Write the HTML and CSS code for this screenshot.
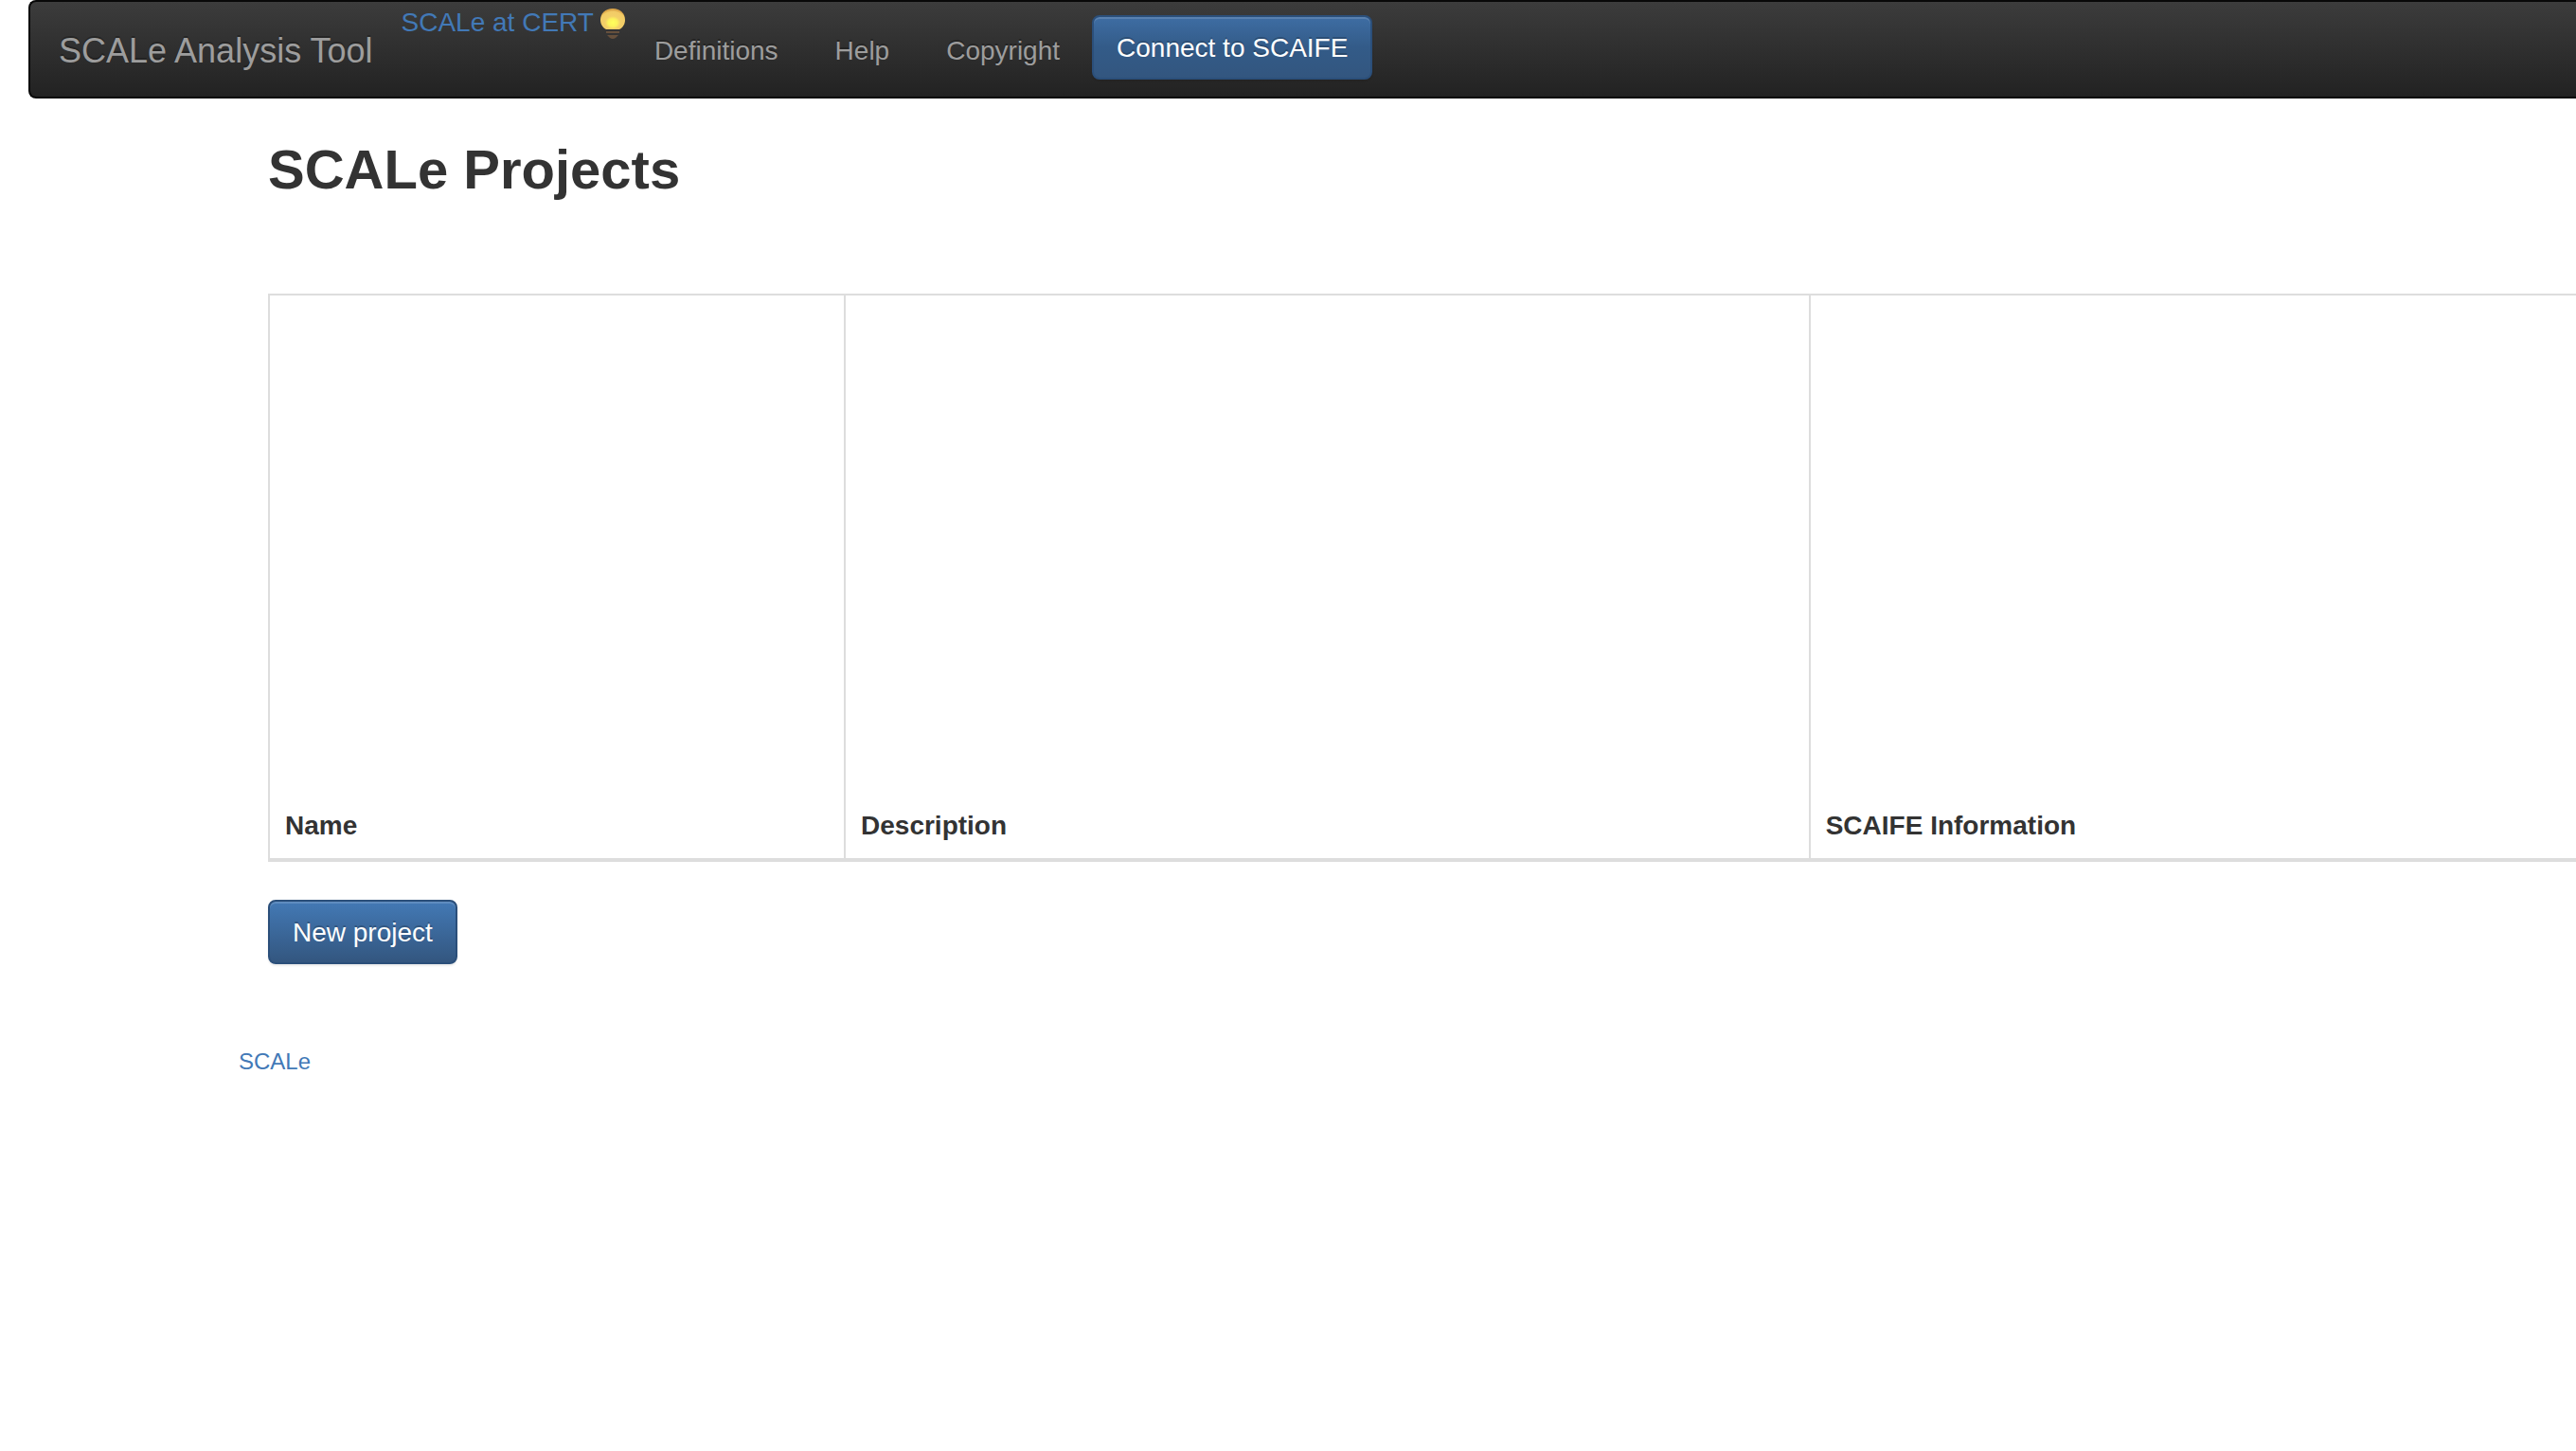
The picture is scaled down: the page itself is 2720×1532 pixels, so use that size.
FILE: index.html
```html
<!DOCTYPE html>
<html lang="en">
<head>
<meta charset="utf-8">
<title>SCALe Analysis Tool</title>
<link rel="stylesheet" href="styles.css">
</head>
<body>
<nav class="navbar">
  <a class="brand" href="#">SCALe Analysis Tool</a>
  <div class="cert">
    <a class="cert-link" href="#">SCALe at CERT</a>
    <svg class="bulb" viewBox="0 0 28 34" aria-hidden="true">
      <defs>
        <radialGradient id="glow" cx="50%" cy="68%" r="62%">
          <stop offset="0" stop-color="#ffff5c"/>
          <stop offset="0.3" stop-color="#fdf25c"/>
          <stop offset="0.5" stop-color="#f3cf68"/>
          <stop offset="0.85" stop-color="#f2cb66"/>
          <stop offset="1" stop-color="#dba548"/>
        </radialGradient>
      </defs>
      <path fill="url(#glow)" d="M14 1C6 1 1 6 1 13c0 4 2 8 6 10h14c4-2 6-6 6-10C27 6 22 1 14 1z"/>
      <path fill="#66503c" d="M7 25h14v2H7zM8 29h12l-3 3q-3 2-6 0z"/>
    </svg>
  </div>
  <a class="nav-link" href="#">Definitions</a>
  <a class="nav-link" href="#">Help</a>
  <a class="nav-link" href="#">Copyright</a>
  <button class="btn btn-connect" type="button">Connect to SCAIFE</button>
</nav>
<main class="content">
  <h1 class="title">SCALe Projects</h1>
  <table class="projects">
    <colgroup><col class="col-name"><col class="col-description"><col></colgroup>
    <thead>
      <tr><th scope="col">Name</th><th scope="col">Description</th><th scope="col">SCAIFE Information</th></tr>
    </thead>
  </table>
  <button class="btn" type="button">New project</button>
</main>
<footer class="footer"><a href="#">SCALe</a></footer>
</body>
</html>
```
FILE: styles.css
```css
* { box-sizing: border-box; }

body {
  margin: 0;
  background: #fff;
  color: #333;
  font: 28px/40px "Liberation Sans", Arial, sans-serif;
}

a { color: #4279b7; text-decoration: none; }

.navbar {
  display: flex;
  align-items: flex-start;
  height: 104px;
  margin-left: 30px;
  padding-left: 30px;
  border: 2px solid #080808;
  border-right: 0;
  border-radius: 8px 0 0 8px;
  background: linear-gradient(#3c3c3c, #222);
}

.brand, .nav-link {
  padding: 32px 30px 28px 0;
  color: #9d9d9d;
  text-shadow: 0 -2px 0 rgba(0, 0, 0, 0.25);
}

.brand { font-size: 36px; }
.nav-link { padding-left: 30px; }

.cert { display: flex; align-items: flex-start; gap: 6px; }
.cert-link { padding-top: 2px; }
.bulb { width: 28px; height: 34px; margin-top: 6px; }

.btn {
  height: 68px;
  padding: 2px 24px 0;
  border: 2px solid #2b4f7a;
  border-radius: 8px;
  background: linear-gradient(#4379b5, #33567f);
  box-shadow: inset 0 2px 0 rgba(255, 255, 255, 0.15), 0 2px 2px rgba(0, 0, 0, 0.075);
  color: #fff;
  font: inherit;
  text-shadow: 0 -2px 0 rgba(0, 0, 0, 0.2);
}

.btn-connect {
  margin: 14px 0 0 4px;
  background: linear-gradient(#3e6da3, #335b88 50%, #33567f);
}

.content { padding-left: 283px; }

.title {
  margin: 0 0 94px;
  padding-top: 38px;
  font-size: 58px;
  line-height: 74px;
}

.projects {
  width: 100%;
  height: 600px;
  margin-bottom: 40px;
  border-top: 2px solid #ddd;
  border-spacing: 0;
  table-layout: fixed;
}

.col-name { width: 24.95%; }
.col-description { width: 41.8%; }

.projects th {
  padding: 18px 16px 14px;
  border-left: 2px solid #ddd;
  border-bottom: 4px solid #ddd;
  text-align: left;
  vertical-align: bottom;
}

.footer {
  padding: 83px 0 0 252px;
  font-size: 24px;
}
```
